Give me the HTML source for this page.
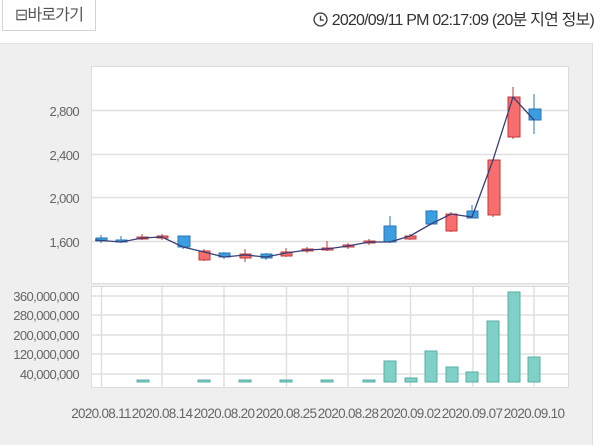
<!DOCTYPE html>
<html><head><meta charset="utf-8"><style>
body{margin:0;width:600px;height:445px;background:#fff;overflow:hidden;font-family:"Liberation Sans","Noto Sans CJK KR",sans-serif;position:relative}
.btn{position:absolute;left:2px;top:0;width:94px;height:31px;border:1px solid #d4d4d4;border-top:none;box-sizing:border-box;font-size:16px;color:#555;line-height:31px;text-align:center;letter-spacing:-0.8px}
.time{position:absolute;right:6px;top:6px;font-size:16px;color:#333;letter-spacing:-0.8px}
.gray{position:absolute;left:0;top:43px;width:593px;height:402px;background:#efefef;border-top:1px solid #e2e2e2;border-right:1px solid #dedede;box-sizing:border-box}
svg{position:absolute;left:0;top:0}
</style></head><body>
<div class="btn">⊟바로가기</div>
<div class="time"><svg style="position:relative;display:inline-block;vertical-align:-2px" width="15" height="15" viewBox="0 0 14 14"><circle cx="7" cy="7" r="6" fill="none" stroke="#444" stroke-width="1.3"/><path d="M7 3.5V7.5H10" fill="none" stroke="#444" stroke-width="1.3"/></svg> 2020/09/11 PM 02:17:09 (20분 지연 정보)</div>
<div class="gray"></div>
<svg width="600" height="445" font-family="Liberation Sans, sans-serif" font-size="13" fill="#666">
<rect x="91.5" y="66.5" width="477" height="217" fill="#fff" stroke="#ddd"/>
<rect x="91.5" y="286.5" width="477" height="101" fill="#fff" stroke="#ddd"/>
<g stroke="#e0e0e0" stroke-width="1.5">
<line x1="92" x2="568" y1="110.5" y2="110.5"/><line x1="92" x2="568" y1="154.5" y2="154.5"/><line x1="92" x2="568" y1="197.5" y2="197.5"/><line x1="92" x2="568" y1="241.5" y2="241.5"/>
<line x1="92" x2="568" y1="296" y2="296"/><line x1="92" x2="568" y1="315" y2="315"/><line x1="92" x2="568" y1="335" y2="335"/><line x1="92" x2="568" y1="354" y2="354"/><line x1="92" x2="568" y1="374" y2="374"/>
<line x1="101.5" x2="101.5" y1="287" y2="387"/><line x1="162" x2="162" y1="287" y2="387"/><line x1="224" x2="224" y1="287" y2="387"/><line x1="286.5" x2="286.5" y1="287" y2="387"/><line x1="348" x2="348" y1="287" y2="387"/><line x1="410.5" x2="410.5" y1="287" y2="387"/><line x1="473" x2="473" y1="287" y2="387"/><line x1="534" x2="534" y1="287" y2="387"/>
</g>
<g text-anchor="end" letter-spacing="-0.6">
<text x="79" y="116">2,800</text><text x="79" y="160">2,400</text><text x="79" y="203">2,000</text><text x="79" y="247">1,600</text>
<text x="79" y="301">360,000,000</text><text x="79" y="320">280,000,000</text><text x="79" y="340">200,000,000</text><text x="79" y="359">120,000,000</text><text x="79" y="379">40,000,000</text>
</g>
<g text-anchor="middle" letter-spacing="-0.7" font-size="13.5">
<text x="101" y="418">2020.08.11</text><text x="162" y="418">2020.08.14</text><text x="224" y="418">2020.08.20</text><text x="286" y="418">2020.08.25</text><text x="348" y="418">2020.08.28</text><text x="410" y="418">2020.09.02</text><text x="472" y="418">2020.09.07</text><text x="534" y="418">2020.09.10</text>
</g>
<g fill="#7fd0c6" stroke="#5aaea3">
<rect x="137" y="380" width="12" height="2"/><rect x="198" y="380" width="12" height="2"/><rect x="239" y="380" width="12" height="2"/><rect x="280" y="380" width="12" height="2"/><rect x="321" y="380" width="12" height="2"/><rect x="363" y="380" width="12" height="2"/>
<rect x="384" y="361" width="12" height="21"/><rect x="405" y="378" width="12" height="4"/><rect x="425" y="351" width="12" height="31"/><rect x="446" y="367" width="12" height="15"/><rect x="466" y="372" width="12" height="10"/><rect x="487" y="321" width="12" height="61"/><rect x="508" y="292" width="12" height="90"/><rect x="528" y="357" width="12" height="25"/>
</g>
<g stroke-width="1">
<g stroke="#2a76b8" fill="#3a9ee0">
<line x1="101" x2="101" y1="235" y2="243"/><rect x="96" y="238" width="11" height="3"/>
<line x1="121" x2="121" y1="236" y2="243"/><rect x="116" y="240" width="11" height="2"/>
<line x1="183" x2="183" y1="236" y2="249"/><rect x="178" y="236" width="12" height="11"/>
<line x1="224" x2="224" y1="252" y2="259"/><rect x="219" y="253" width="11" height="4"/>
<line x1="266" x2="266" y1="253" y2="260"/><rect x="261" y="254" width="11" height="4"/>
<line x1="390" x2="390" y1="216" y2="243"/><rect x="384" y="226" width="12" height="16"/>
<line x1="431" x2="431" y1="210" y2="225"/><rect x="426" y="211" width="11" height="13"/>
<line x1="472" x2="472" y1="205" y2="218"/><rect x="467" y="211" width="11" height="7"/>
<line x1="534" x2="534" y1="94" y2="134"/><rect x="529" y="109" width="12" height="11"/>
</g>
<g stroke="#c0393b" fill="#f86d6d">
<line x1="142" x2="142" y1="234" y2="240"/><rect x="137" y="237" width="11" height="2"/>
<line x1="162" x2="162" y1="234" y2="240"/><rect x="157" y="236" width="11" height="2"/>
<line x1="204" x2="204" y1="249" y2="261"/><rect x="199" y="251" width="11" height="9"/>
<line x1="245" x2="245" y1="249" y2="262"/><rect x="240" y="254" width="11" height="4"/>
<line x1="286" x2="286" y1="248" y2="257"/><rect x="281" y="252" width="11" height="4"/>
<line x1="307" x2="307" y1="247" y2="253"/><rect x="302" y="249" width="11" height="2"/>
<line x1="327" x2="327" y1="241" y2="251"/><rect x="322" y="248" width="11" height="2"/>
<line x1="348" x2="348" y1="243" y2="249"/><rect x="343" y="245" width="11" height="2"/>
<line x1="369" x2="369" y1="239" y2="245"/><rect x="364" y="241" width="11" height="2"/>
<line x1="410" x2="410" y1="234" y2="240"/><rect x="405" y="236" width="11" height="3"/>
<line x1="451" x2="451" y1="212" y2="232"/><rect x="446" y="214" width="11" height="17"/>
<line x1="493" x2="493" y1="159" y2="217"/><rect x="488" y="160" width="12" height="55"/>
<line x1="513" x2="513" y1="87" y2="139"/><rect x="508" y="97" width="12" height="40"/>
</g>
</g>
<polyline fill="none" stroke="#3b3f75" stroke-width="1.3" points="95,240 121,242 142,238 162,237 183,247 204,252 224,257 245,255 266,257 286,253 307,250 327,249 348,246 369,242 390,242 410,236 431,224 451,214 472,217 493,160 513,97 534,120"/>
</svg>
</body></html>
